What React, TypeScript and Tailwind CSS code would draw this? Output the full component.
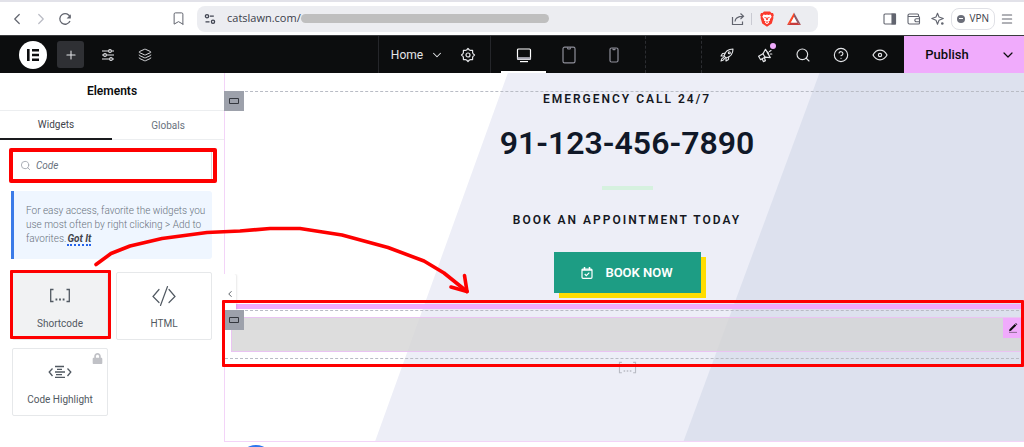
import type { ReactNode } from "react";
import { clsx } from "clsx";
import {
  Bookmark,
  ChevronDown,
  ChevronLeft,
  ChevronRight,
  CircleQuestionMark,
  Layers,
  Menu,
  Plus,
  Search,
} from "lucide-react";
import { FaLock } from "react-icons/fa";

type IconProps = { className?: string };

function ReloadIcon({ className }: IconProps) {
  return (
    <svg viewBox="0 0 14 14" fill="none" stroke="currentColor" strokeWidth="1.3" className={className}>
      <path d="M12 9a5.3 5.3 0 1 1 .2-3.6" />
      <path d="M12.8 2.2v4.2H8.6z" fill="currentColor" stroke="none" />
    </svg>
  );
}

function SiteSettingsIcon({ className }: IconProps) {
  return (
    <svg viewBox="0 0 12 12" fill="none" stroke="currentColor" strokeWidth="1.3" className={className}>
      <circle cx="3" cy="3.2" r="1.6" />
      <path d="M5.8 3.2h4M1.5 8.8h4" />
      <circle cx="9" cy="8.8" r="1.6" />
    </svg>
  );
}

function ShareIcon({ className }: IconProps) {
  return (
    <svg viewBox="0 0 14 14" fill="none" stroke="currentColor" strokeWidth="1.2" className={className}>
      <path d="M1.500 5v7.500h10V9.500" />
      <path d="M4 9.500C4.200 6 6.500 4.300 12 4.300M9.500 1.500l3 2.800-3 2.800" />
    </svg>
  );
}

function BraveIcon({ className }: IconProps) {
  return (
    <svg viewBox="0 0 14 16" className={className}>
      <path
        fill="#fb3a2c"
        d="M4 .5h6l1.500 1.600 1.500-.1.800 2.300-.6 1.400.2 1.200-1.600 5.700L7 15.700l-4.800-3.100L.6 6.900l.2-1.200L.2 4.300 1 2l1.500.1z"
      />
      <path
        fill="#fff"
        d="M3.500 3.500 5.800 4 7 3.600 8.200 4l2.300-.5 1.200 2.200-2 2.700.4 1.200-1.700 1 .8 1L7 13.300l-2.200-1.700.8-1-1.700-1 .4-1.200-2-2.700z"
      />
      <path fill="#fb3a2c" d="m3.700 5.800 2.500.7-.7.900zM10.300 5.800l-2.500.7.7.9zM6.400 6.500h1.200l.5 2L7 9.300l-1.100-.8zM5.700 11 7 10.300l1.300.7L7 12z" />
    </svg>
  );
}

function BatIcon({ className }: IconProps) {
  return (
    <svg viewBox="0 0 16 14" className={className}>
      <path fill="#ff4724" d="M8 .5 1 13l4-2.500L8 5z" />
      <path fill="#8d5b69" d="M8 .5 15 13l-4-2.500L8 5z" />
      <path fill="#c83c3c" d="M1 13h14l-4-2.500H5z" />
      <path fill="#fff" d="M8 5l3 5.500H5z" />
    </svg>
  );
}

function SidePanelIcon({ className }: IconProps) {
  return (
    <svg viewBox="0 0 14 12" fill="none" stroke="currentColor" strokeWidth="1.1" className={className}>
      <rect x="1" y="1" width="11.500" height="10" rx="1" />
      <path d="M9 1h3.500v10H9z" fill="currentColor" />
    </svg>
  );
}

function WalletIcon({ className }: IconProps) {
  return (
    <svg viewBox="0 0 14 12" fill="none" stroke="currentColor" strokeWidth="1.1" className={className}>
      <path d="M11.500 3.500V2a1 1 0 0 0-1-1H2.500a1.500 1.500 0 0 0-1.500 1.500V9.500A1.500 1.500 0 0 0 2.500 11h9a1 1 0 0 0 1-1V4.500a1 1 0 0 0-1-1H2.500A1.300 1.300 0 0 1 1 2.500" />
      <path d="M12.500 5.700H9.300a1.500 1.500 0 0 0 0 3h3.200" />
    </svg>
  );
}

function LeoIcon({ className }: IconProps) {
  return (
    <svg viewBox="0 0 14 14" fill="none" stroke="currentColor" strokeWidth="1.100" strokeLinejoin="round" className={className}>
      <path d="M6.500 1.200 8 5l4.300 1.500L8 8.200l-1.500 4L5 8.200.8 6.500 5 5z" />
      <circle cx="11.300" cy="11.500" r="1.300" fill="currentColor" stroke="none" />
    </svg>
  );
}

function ElementorLogo({ className }: IconProps) {
  return (
    <svg viewBox="0 0 28 28" className={className}>
      <circle cx="14" cy="14" r="14" fill="#fff" />
      <path fill="#0c0d0e" d="M8 8h2.600v12H8zM13 8h7v2.400h-7zM13 12.800h7v2.400h-7zM13 17.600h7V20h-7z" />
    </svg>
  );
}

function SlidersIcon({ className }: IconProps) {
  return (
    <svg viewBox="0 0 14 14" fill="none" stroke="currentColor" strokeWidth="1.100" className={className}>
      <path d="M1 3h6.500M10.500 3H13M1 7h1.500M5.500 7H13M1 11h7.500M11.500 11H13" />
      <circle cx="9" cy="3" r="1.400" />
      <circle cx="4" cy="7" r="1.400" />
      <circle cx="10" cy="11" r="1.400" />
    </svg>
  );
}

function GearIcon({ className }: IconProps) {
  return (
    <svg viewBox="0 0 16 16" fill="none" stroke="currentColor" strokeWidth="1.200" strokeLinejoin="round" className={className}>
      <path d="M6.600 3 8 1.500 9.400 3l1.100.4 2.100 0 0 2.100.4 1.100L14.500 8 13 9.400l-.4 1.100 0 2.100-2.100 0-1.100.4L8 14.500 6.600 13l-1.100-.4-2.100 0 0-2.100L3 9.400 1.500 8 3 6.600l.4-1.100 0-2.100 2.100 0z" />
      <circle cx="8" cy="8" r="2" />
    </svg>
  );
}

function DesktopIcon({ className }: IconProps) {
  return (
    <svg viewBox="0 0 16 16" fill="none" stroke="currentColor" strokeWidth="1.200" className={className}>
      <rect x="1.500" y="2" width="13" height="10.500" rx="1" />
      <path d="M1.500 11.300h13" strokeWidth="2.400" stroke="#a9a9b4" />
      <path d="M4 14.600h8" />
    </svg>
  );
}

function TabletIcon({ className }: IconProps) {
  return (
    <svg viewBox="0 0 14 18" fill="none" stroke="currentColor" strokeWidth="1.200" className={className}>
      <rect x="1" y="1.200" width="12" height="15.600" rx="1.600" />
      <path d="M5.300 1.500 6 3h2l.7-1.500" />
    </svg>
  );
}

function MobileIcon({ className }: IconProps) {
  return (
    <svg viewBox="0 0 10 16" fill="none" stroke="currentColor" strokeWidth="1.200" className={className}>
      <rect x="1" y="1" width="8" height="14" rx="1.500" />
      <path d="M3.700 1.500 4.200 2.600h1.600l.5-1.100" />
    </svg>
  );
}

function RocketIcon({ className }: IconProps) {
  return (
    <svg viewBox="0 0 14 14" fill="none" stroke="currentColor" strokeWidth="1.100" strokeLinejoin="round" strokeLinecap="round" className={className}>
      <path d="M4 8c1-4 4-7 9-7 0 5-3 8-7 9z" />
      <path d="M5 5.300 2.500 5.500 1 8l3 0M8.700 9l-.2 2.500L6 13V10M3.500 9.500C2 10 1.300 11.300 1 13c1.700-.3 3-1 3.500-2.500" />
      <circle cx="9.300" cy="4.700" r="1" />
    </svg>
  );
}

function MegaphoneIcon({ className }: IconProps) {
  return (
    <svg viewBox="0 0 16 16" fill="none" stroke="currentColor" strokeWidth="1.200" strokeLinejoin="round" strokeLinecap="round" className={className}>
      <path d="M8.500 2.300 13.300 10.600 8 10.200 3.600 12.700 1.600 9.300 6 6.800z" />
      <path d="m6 6.800 2 3.400M5.200 12l1.200 2.600 2-1-1-3M11.200 7a1.700 1.700 0 0 0-.7-2M12.500 4.500l1.500-.9M13.300 7h1.500" />
    </svg>
  );
}

function EyeIcon({ className }: IconProps) {
  return (
    <svg viewBox="0 0 16 16" fill="none" stroke="currentColor" strokeWidth="1.200" className={className}>
      <path d="M1 8c1.700-3.200 4-4.800 7-4.800S13.300 4.800 15 8c-1.700 3.200-4 4.800-7 4.800S2.700 11.200 1 8z" />
      <circle cx="8" cy="8" r="1.600" />
    </svg>
  );
}

function ContainerIcon({ className }: IconProps) {
  return (
    <svg viewBox="0 0 10 8" fill="none" stroke="currentColor" className={className}>
      <path d="M.5 1.500h9v5h-9z" />
    </svg>
  );
}

function ShortcodeIcon({ className }: IconProps) {
  return (
    <svg viewBox="0 0 22 16" fill="none" stroke="currentColor" strokeWidth="1.300" className={className}>
      <path d="M4.500 1.500H1.700v12h2.800M17.500 1.500h2.800v12h-2.800" />
      <path d="M6.500 11.500h1.800M10.100 11.500h1.800M13.700 11.500h1.800" strokeWidth="1.800" />
    </svg>
  );
}

function HtmlIcon({ className }: IconProps) {
  return (
    <svg viewBox="0 0 24 22" fill="none" stroke="currentColor" strokeWidth="1.200" strokeLinecap="round" className={className}>
      <path d="m7 4.500-6 7 6 6M17 4.500l6 7-6 6M15.500 1.500l-7 19" />
    </svg>
  );
}

function CodeHighlightIcon({ className }: IconProps) {
  return (
    <svg viewBox="0 0 24 14" fill="none" stroke="currentColor" strokeWidth="1.300" className={className}>
      <path d="M4.500 3.500 1.200 7l3.300 4M19.500 3.500 22.800 7l-3.300 4" />
      <path d="M7 1.500h9M9 4.300h5M7 7h10M8 9.700h6M7 12.400h10" />
    </svg>
  );
}

function CalendarCheckIcon({ className }: IconProps) {
  return (
    <svg viewBox="0 0 12 12" fill="none" stroke="currentColor" strokeWidth="1.200" className={className}>
      <rect x="1" y="2" width="10" height="9.300" rx="1" />
      <path d="M3.500 0v2.500M8.500 0v2.500M1 3h10" strokeWidth="1.500" />
      <path d="m3.700 7 1.600 1.700 3-3" />
    </svg>
  );
}

function PencilIcon({ className }: IconProps) {
  return (
    <svg viewBox="0 0 10 10" className={className}>
      <path d="M1.500 6.300 6.800 1l1.500 1.500L3 7.800l-1.900.4zM7.300.6l.6-.5 1.500 1.500-.6.500z" fill="#0c0d0e" />
      <path d="M1 9.400h8" stroke="#8d6c94" />
    </svg>
  );
}

function IconButton({
  label,
  className,
  children,
}: {
  label: string;
  className?: string;
  children: ReactNode;
}) {
  return (
    <button
      type="button"
      aria-label={label}
      className={clsx("flex shrink-0 items-center justify-center", className)}
    >
      {children}
    </button>
  );
}

function BrowserBar() {
  return (
    <header className="flex h-[35px] items-center border-t-2 border-[#e2e2e9] bg-white pr-[10px] pl-[5px] text-[#62656f]">
      <IconButton label="Back" className="w-6">
        <ChevronLeft className="size-[18px]" strokeWidth={1.6} />
      </IconButton>
      <IconButton label="Forward" className="w-6 text-[#b9bbc4]">
        <ChevronRight className="size-[18px]" strokeWidth={1.6} />
      </IconButton>
      <IconButton label="Reload" className="w-6">
        <ReloadIcon className="size-[14px]" />
      </IconButton>
      <IconButton label="Bookmark" className="mr-[7px] ml-[89px] w-6">
        <Bookmark className="size-[15px]" strokeWidth={1.6} />
      </IconButton>
      <div className="mr-15 flex h-[26px] flex-1 items-center rounded-lg bg-[#ecedf1] pr-4 pl-[7px]">
        <SiteSettingsIcon className="mr-[11px] size-3 text-[#3f4350]" />
        <span className="font-['Open_Sans',sans-serif] text-[11px] text-[#3b3e4a]">
          catslawn.com/
        </span>
        <span className="h-[9px] w-[248px] rounded-full bg-[#bfbfbf]" />
        <IconButton label="Share" className="ml-auto w-6">
          <ShareIcon className="size-[14px]" />
        </IconButton>
        <span className="mr-2 ml-px h-3 w-px bg-[#c9cad2]" />
        <IconButton label="Brave Shields">
          <BraveIcon className="h-4 w-[14px]" />
        </IconButton>
        <IconButton label="Brave Rewards" className="ml-3">
          <BatIcon className="h-[14px] w-4" />
        </IconButton>
      </div>
      <IconButton label="Side panel" className="w-6">
        <SidePanelIcon className="h-3 w-[14px]" />
      </IconButton>
      <IconButton label="Wallet" className="w-6">
        <WalletIcon className="h-3 w-[14px]" />
      </IconButton>
      <IconButton label="Leo AI" className="w-6">
        <LeoIcon className="size-[14px]" />
      </IconButton>
      <button
        type="button"
        className="mr-[5px] ml-px flex h-[22px] items-center gap-1 rounded-lg border border-[#e0e1e6] px-[5px] font-['Open_Sans',sans-serif] text-[10px] text-[#3b3e4a]"
      >
        <span className="flex size-2 items-center justify-center rounded-full bg-[#6b6e79]">
          <span className="h-px w-1 bg-white" />
        </span>
        VPN
      </button>
      <IconButton label="Menu">
        <Menu className="size-[14px]" strokeWidth={1.8} />
      </IconButton>
    </header>
  );
}

function EditorBar() {
  return (
    <nav className="grid h-[38px] grid-cols-[1fr_auto_1fr] border-t border-[#3a3b3e] bg-[#0c0d0e] text-[#e4e5e8]">
      <div className="flex items-center pl-[19px]">
        <IconButton label="Elementor" className="mr-[10px]">
          <ElementorLogo className="size-7" />
        </IconButton>
        <IconButton label="Add element" className="mr-[10px] size-[27px] rounded-[3px] bg-[#2f3034]">
          <Plus className="size-[14px]" strokeWidth={1.8} />
        </IconButton>
        <IconButton label="Site settings" className="w-[27px]">
          <SlidersIcon className="size-[14px]" />
        </IconButton>
        <IconButton label="Structure" className="ml-[10px] w-[27px]">
          <Layers className="size-[14px]" strokeWidth={1.6} />
        </IconButton>
      </div>

      <div className="flex border-r border-dashed border-[#2c2d31]">
        <div className="flex items-center border-x border-[#25262a] pr-[14px] pl-3">
          <button type="button" className="flex items-center gap-[7px] text-xs">
            Home
            <ChevronDown className="size-[14px]" strokeWidth={1.800} />
          </button>
          <IconButton label="Page settings" className="ml-4">
            <GearIcon className="size-4" />
          </IconButton>
        </div>
        <IconButton label="Desktop" className="ml-[10px] w-[45px] border-b-2 border-white pt-[2px] text-white">
          <DesktopIcon className="size-4" />
        </IconButton>
        <IconButton label="Tablet portrait" className="w-[45px] text-[#8f8f9a]">
          <TabletIcon className="h-[18px] w-[14px]" />
        </IconButton>
        <IconButton label="Mobile portrait" className="mr-[9px] w-[45px] text-[#8f8f9a]">
          <MobileIcon className="h-4 w-[10px]" />
        </IconButton>
      </div>

      <div className="flex justify-end">
        <div className="flex items-center border-l border-dashed border-[#2c2d31] pr-[5px] pl-[5px]">
          <IconButton label="Getting started" className="w-[39px]">
            <RocketIcon className="size-[14px]" />
          </IconButton>
          <IconButton label="What's new" className="relative w-[38px]">
            <MegaphoneIcon className="size-4" />
            <span className="absolute -top-1 right-2 size-[6px] rounded-full bg-[#f0abfc]" />
          </IconButton>
          <IconButton label="Finder" className="w-[38px]">
            <Search className="size-4" strokeWidth={1.700} />
          </IconButton>
          <IconButton label="Help" className="w-[38px]">
            <CircleQuestionMark className="size-4" strokeWidth={1.700} />
          </IconButton>
          <IconButton label="Preview" className="w-[39px]">
            <EyeIcon className="size-4" />
          </IconButton>
        </div>
        <div className="flex w-[120px] bg-[#f0abfc] text-[#0c0d0e]">
          <button type="button" className="flex-1 pr-[2px] text-[13px] font-medium">
            Publish
          </button>
          <IconButton label="Save options" className="w-8">
            <ChevronDown className="size-4" strokeWidth={1.800} />
          </IconButton>
        </div>
      </div>
    </nav>
  );
}

function WidgetCard({
  title,
  icon,
  active,
  locked,
}: {
  title: string;
  icon: ReactNode;
  active?: boolean;
  locked?: boolean;
}) {
  return (
    <button
      type="button"
      className={clsx(
        "relative flex h-[68px] flex-col items-center rounded-[2px] border border-[#e6e8ea] pt-[10px] text-[10px] text-[#515962]",
        active && "bg-[#f1f2f3]"
      )}
    >
      <span className="mb-2 flex h-[26px] items-center">{icon}</span>
      <span className="leading-[14px]">{title}</span>
      {locked && <FaLock className="absolute top-1 right-1 size-[11px] text-[#c0c1c6]" />}
      {active && (
        <span className="absolute -top-[3px] -right-1 bottom-0 -left-[3px] rounded-[1px] border-[3px] border-[#fe0000]" />
      )}
    </button>
  );
}

function ElementsPanel() {
  return (
    <aside className="w-[224px] shrink-0 bg-white">
      <h1 className="border-b border-[#eceef0] text-center text-xs leading-[37px] font-semibold text-[#0c0d0e]">
        Elements
      </h1>
      <div role="tablist" className="grid grid-cols-2 text-[10px]">
        <button
          type="button"
          role="tab"
          aria-selected="true"
          className="h-[29px] border-b-2 border-[#1a1b1e] text-[#3f444b]"
        >
          Widgets
        </button>
        <button
          type="button"
          role="tab"
          aria-selected="false"
          className="h-[29px] border-b border-[#eceef0] text-[#69727d]"
        >
          Globals
        </button>
      </div>

      <div className="px-3 pt-[11px]">
        <label className="relative flex h-[29px] items-center gap-[5px] border border-[#d5d8dc] pl-[7px]">
          <Search className="size-[11px] shrink-0 text-[#a4a8b0]" />
          <input
            type="search"
            aria-label="Search widget"
            defaultValue="Code"
            className="w-full bg-transparent text-[10px] text-[#69727d] italic outline-none"
          />
          <span className="pointer-events-none absolute -top-[4px] -right-[6px] -bottom-[4px] -left-[4px] rounded-[2px] border-4 border-[#fe0000]" />
        </label>

        <p className="mt-[11px] -ml-px rounded-r-[3px] border-l-[3px] border-[#3b7be8] bg-[#eff6ff] py-[13px] pr-1 pl-3 text-[10px] leading-[14px] font-light text-[#69727d]">
          For easy access, favorite the widgets you use most often by right clicking &gt; Add to
          favorites.
          <a
            href="#"
            className="ml-px border-b-2 border-dotted border-[#2563eb] font-bold text-[#3f444b] italic"
          >
            Got It
          </a>
        </p>

        <div className="mt-[13px] grid grid-cols-2 gap-2">
          <WidgetCard title="Shortcode" active icon={<ShortcodeIcon className="h-4 w-[22px]" />} />
          <WidgetCard title="HTML" icon={<HtmlIcon className="h-[22px] w-6" />} />
          <WidgetCard
            title="Code Highlight"
            locked
            icon={<CodeHighlightIcon className="h-[14px] w-6" />}
          />
        </div>
      </div>
    </aside>
  );
}

function SectionHandle({ className }: IconProps) {
  return (
    <IconButton
      label="Edit container"
      className={clsx("absolute size-5 bg-[#9da1ab] text-[#34373e]", className)}
    >
      <ContainerIcon className="h-2 w-[10px]" />
    </IconButton>
  );
}

function Canvas() {
  return (
    <main className="relative flex min-w-0 flex-1 flex-col bg-white">
      <div className="relative flex flex-1 flex-col border-b border-l border-[#f3d4f8] pt-[18px]">
        <div className="absolute inset-0 bg-[#edeef7] [clip-path:polygon(35.400%_0,100%_0,100%_100%,18.800%_100%)]" />
        <div className="absolute inset-0 bg-[#dde1ee] [clip-path:polygon(74.400%_0,100%_0,100%_100%,57.400%_100%)]" />

        <section className="relative flex h-[213px] flex-col items-center border-t border-dashed border-[#b9bcc5] pl-[5px] text-[#15181f]">
          <SectionHandle className="-top-px -left-px" />
          <h2 className="text-xs leading-[15px] font-semibold tracking-[2px]">
            EMERGENCY CALL 24/7
          </h2>
          <p className="mt-4 text-[32px] leading-10 font-semibold text-[#101828]">
            91-123-456-7890
          </p>
          <hr className="mt-[23px] h-1 w-[51px] border-0 bg-[#d6f1df]" />
          <h2 className="mt-[22px] text-xs leading-4 font-semibold tracking-[2px]">
            BOOK AN APPOINTMENT TODAY
          </h2>
          <button
            type="button"
            className="mt-6 flex h-[41px] w-[147px] shrink-0 items-center justify-center gap-3 bg-[#1d9d84] text-[13px] font-semibold text-white shadow-[5px_5px_0_#ffdd00]"
          >
            <CalendarCheckIcon className="size-3" />
            BOOK NOW
          </button>
        </section>

        <div className="relative ml-[11px] h-[5px] bg-[#f0abfc]" />
        <section className="relative z-10 mt-px h-[49px] border-y border-dashed border-[#b9bcc5] py-[6px] pl-[6px]">
          <div className="flex h-[35px] justify-end border border-[#eac4f2] bg-[#d5d5d5]/80">
            <IconButton label="Edit shortcode" className="size-5 bg-[#f0abfc]">
              <PencilIcon className="size-[10px]" />
            </IconButton>
          </div>
          <SectionHandle className="-top-px -left-px" />
          <span className="pointer-events-none absolute -top-[11px] right-0 -left-[3px] h-[67px] rounded-[1px] border-[3px] border-[#fe0000]" />
        </section>
        <div className="relative mt-[2px] flex justify-center pl-[5px]">
          <ShortcodeIcon className="h-[14px] w-[19px] text-[#b9bbc4]" />
        </div>
      </div>

      <div className="h-[5px] overflow-hidden pl-[15px]">
        <div className="mt-[3px] size-[34px] rounded-full bg-[#2f76ee]" />
      </div>

      <IconButton
        label="Hide panel"
        className="absolute top-[201px] left-0 h-[39px] w-3 rounded-r-[2px] bg-white text-[#3f444b] shadow-[1px_0_2px_#00000018] [clip-path:inset(0_-3px_0_0)]"
      >
        <ChevronLeft className="size-[10px]" />
      </IconButton>
    </main>
  );
}

// Hand-drawn arrow from the Shortcode widget to the drop area
function DragArrow() {
  return (
    <svg
      width="400"
      height="80"
      viewBox="84 220 400 80"
      fill="none"
      stroke="#fe0000"
      strokeWidth="3.600"
      strokeLinecap="round"
      strokeLinejoin="round"
      className="pointer-events-none absolute top-[147px] left-[84px]"
    >
      <path d="M96 264.500 111 253.500 130 246 162 238.500 207 232.500 240 231 270 228.500 300 228.500 342 235 388 247.500 424 261 444 273 467 291.500" />
      <path d="M464.500 275.500 467 291.500 451 287" />
    </svg>
  );
}

export default function App() {
  return (
    <div className="flex min-h-screen flex-col overflow-hidden bg-white font-[Roboto,sans-serif]">
      <BrowserBar />
      <EditorBar />
      <div className="relative flex flex-1">
        <ElementsPanel />
        <Canvas />
        <DragArrow />
      </div>
    </div>
  );
}
